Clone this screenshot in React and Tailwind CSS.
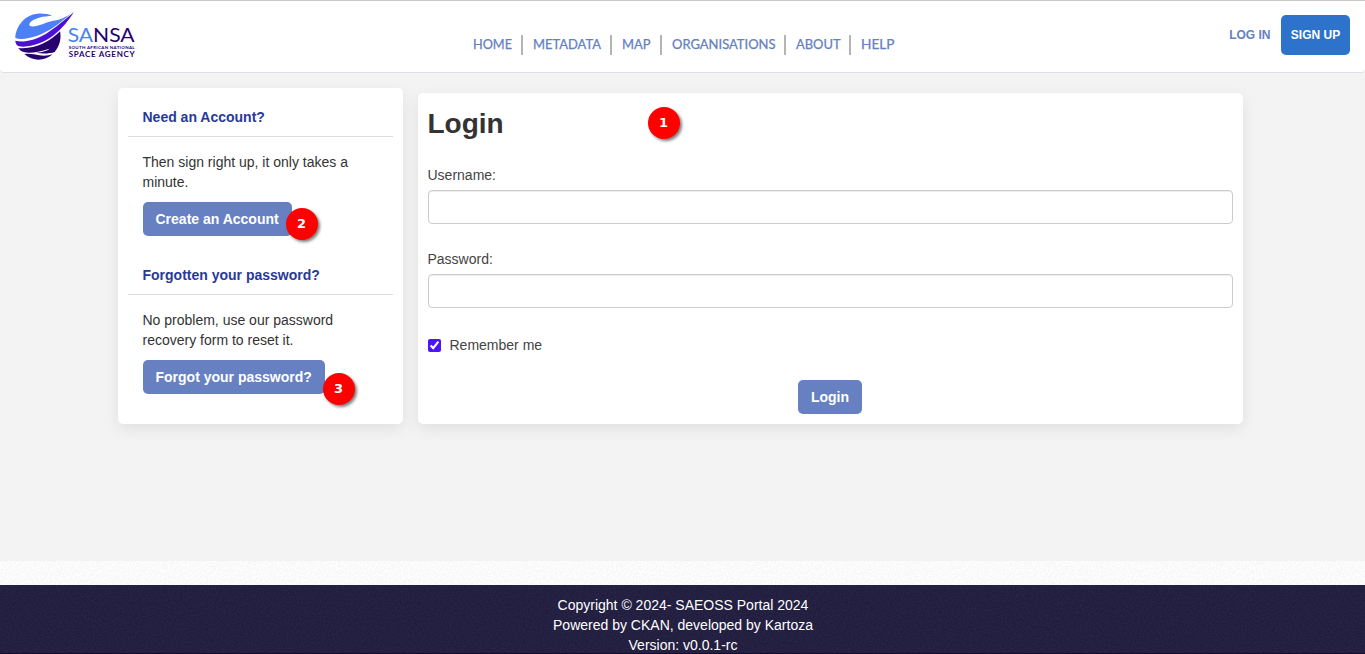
import React from "react";

const SANS = "font-['Liberation_Sans',Arial,sans-serif]";

const NAV = [
  { label: "HOME", cell: "w-[50px]", length: 39 },
  { label: "METADATA", cell: "w-[89px]", length: 68 },
  { label: "MAP", cell: "w-[50px]", length: 28.5 },
  { label: "ORGANISATIONS", cell: "w-[124px]", length: 103.5 },
  { label: "ABOUT", cell: "w-[65px]", length: 44.5 },
  { label: "HELP", cell: "w-[54px]", length: 33.5 },
];

function Logo() {
  return (
    <svg className="block h-[72px] w-[150px]" viewBox="0 0 450 216" role="img" aria-label="SANSA">
      <path
        fill="#4d80f7"
        d="M46 114C47 78 76 43 113 41C130 40 145 42 156 48C133 48 103 54 91 67C83 77 91 81 104 79C126 76 142 64 170 61C184 58 199 50 211 43C181 68 147 96 112 107C87 115 63 120 46 114Z"
      />
      <path
        fill="#4c0fd6"
        d="M46 122C80 130 119 116 149 94C177 75 200 54 222 36C207 60 186 86 161 106C127 132 83 145 54 138C49 134 46 128 46 122Z"
      />
      <path
        fill="#270070"
        d="M180 94C185 117 178 140 164 156C150 161 126 162 108 158C128 156 143 152 148 146C122 155 82 163 65 154C60 150 57 147 55 144C100 149 149 127 180 94Z"
      />
      <path fill="#270070" d="M73 162C91 160 105 163 118 166C132 168 146 167 158 163C134 184 98 185 73 162Z" />
      <g className="font-['Lato',sans-serif]" fill="#270070">
        <text x="203" y="126" fontSize="60" textLength="201" lengthAdjust="spacingAndGlyphs">
          <tspan fill="#4d80f7">SA</tspan>
          <tspan>NSA</tspan>
        </text>
        <text x="206" y="146" fontSize="13.5" fontWeight="700" textLength="198" lengthAdjust="spacing">
          SOUTH AFRICAN NATIONAL
        </text>
        <text x="206" y="172" fontSize="24" fontWeight="700" textLength="198" lengthAdjust="spacing">
          SPACE AGENCY
        </text>
      </g>
    </svg>
  );
}

function NavLabel({ label, length }) {
  return (
    <svg className="block h-5 w-full overflow-visible">
      <text
        x="0"
        y="14"
        fill="#6480c1"
        stroke="#6480c1"
        strokeWidth="0.25"
        textLength={length}
        lengthAdjust="spacingAndGlyphs"
        className="font-['Lato',sans-serif] text-[12.5px]"
      >
        {label}
      </text>
    </svg>
  );
}

function Grain({ id, matrix }) {
  return (
    <svg className="absolute inset-0 h-full w-full" aria-hidden="true">
      <filter id={id} x="0" y="0" width="100%" height="100%" colorInterpolationFilters="sRGB">
        <feTurbulence type="fractalNoise" baseFrequency="0.6" numOctaves="2" stitchTiles="stitch" />
        <feColorMatrix type="matrix" values={matrix} />
      </filter>
      <rect width="100%" height="100%" filter={`url(#${id})`} />
    </svg>
  );
}

function Marker({ n, place }) {
  return (
    <span
      className={`absolute flex size-8 items-center justify-center rounded-full bg-[#fe0000] font-['DejaVu_Sans',sans-serif] text-[13px] leading-none font-bold text-white shadow-[2px_2px_3px_rgba(0,0,0,0.5)] ${place}`}
    >
      {n}
    </span>
  );
}

function Button({ children, marker }) {
  return (
    <button className="relative block h-[34px] rounded-[5px] bg-[#6680c2] px-[13px] text-sm font-bold whitespace-nowrap text-white">
      {children}
      {marker}
    </button>
  );
}

function HelpSection({ title, text, children }) {
  return (
    <section>
      <h2 className="border-b border-[#dddddd] pt-[9px] pb-[9px] pl-[15px] text-sm leading-5 font-bold text-[#28399a]">
        {title}
      </h2>
      <div className="pt-[15px] pl-[15px]">
        <p className="mb-[10px] w-[225px] text-sm leading-5 text-[#333333]">{text}</p>
        {children}
      </div>
    </section>
  );
}

function Field({ label, type }) {
  return (
    <label className="block text-sm leading-5 text-[#444444]">
      {label}
      <input
        type={type}
        className="mt-[5px] block h-[34px] w-full rounded-[4px] border border-[#cccccc] bg-white px-3 shadow-[inset_0_1px_1px_rgba(0,0,0,0.075)]"
      />
    </label>
  );
}

const CARD = "rounded-[5px] bg-white px-[10px] shadow-[0_5px_15px_rgba(0,0,0,0.08)]";

export default function App() {
  return (
    <div className={`flex h-[654px] w-full flex-col overflow-hidden bg-[#f3f3f3] ${SANS}`}>
      <header className="flex h-[73px] shrink-0 justify-between rounded-b-[4px] border-t border-b border-t-[#c8c8c8] border-b-[#dcdfe5] bg-white">
        <div className="-mt-px w-[472.5px]">
          <Logo />
        </div>
        <nav className="flex pt-[34px]">
          {NAV.map(({ label, cell, length }, i) => (
            <a
              key={label}
              className={`block h-5 shrink-0 ${cell} ${i ? "pl-[10.5px]" : ""} ${
                i < NAV.length - 1 ? "border-r-2 border-[#b4b4b4]" : ""
              }`}
            >
              <NavLabel label={label} length={length} />
            </a>
          ))}
        </nav>
        <div className="flex flex-1 items-start justify-end gap-[10.5px] pt-[14px] pr-[15px] text-xs font-bold">
          <a className="leading-10 text-[#6480c1]">LOG IN</a>
          <a className="w-[69px] rounded-[5px] bg-[#2e73cb] text-center leading-10 text-white">SIGN UP</a>
        </div>
      </header>

      <main className="flex h-[488px] shrink-0 items-start gap-[15px] pt-[15px] pl-[117.5px]">
        <aside className={`flex h-[336px] w-[285px] flex-col gap-5 pt-[10px] ${CARD}`}>
          <HelpSection title="Need an Account?" text="Then sign right up, it only takes a minute.">
            <Button marker={<Marker n="2" place="top-[5.5px] left-[143px]" />}>Create an Account</Button>
          </HelpSection>
          <HelpSection title="Forgotten your password?" text="No problem, use our password recovery form to reset it.">
            <Button marker={<Marker n="3" place="top-[12.5px] left-[180px]" />}>Forgot your password?</Button>
          </HelpSection>
        </aside>

        <section className={`relative mt-[5px] h-[331px] w-[825px] pt-[10px] ${CARD}`}>
          <h1 className="pt-px text-[28px] leading-[40px] font-bold text-[#333333]">Login</h1>
          <Marker n="1" place="top-[13.5px] left-[230px]" />
          <form className="flex flex-col pt-[21px]" onSubmit={(e) => e.preventDefault()}>
            <div className="flex flex-col gap-[25px]">
              <Field label="Username:" type="text" />
              <Field label="Password:" type="password" />
            </div>
            <label className="mt-[27px] flex items-center text-sm leading-5 text-[#444444]">
              <input type="checkbox" defaultChecked className="mr-[9px] size-[13px] accent-[#4b14fb]" />
              Remember me
            </label>
            <div className="mt-[25px] flex justify-center">
              <Button>Login</Button>
            </div>
          </form>
        </section>
      </main>

      <div className="relative h-6 shrink-0 bg-[#f7f7f7]">
        <Grain id="grain-light" matrix="0 0 0 0 1  0 0 0 0 1  0 0 0 0 1  3 0 0 0 -1.1" />
      </div>
      <footer className="relative h-[69px] shrink-0 border-b border-[#140c2c] bg-[#211d3e]">
        <Grain id="grain-dark" matrix="0 0 0 0 0.19  0 0 0 0 0.17  0 0 0 0 0.31  1.4 0 0 0 -0.5" />
        <div className="relative pt-[10px] pl-px text-center text-sm leading-5 text-white">
          <p>Copyright © 2024- SAEOSS Portal 2024</p>
          <p>Powered by CKAN, developed by Kartoza</p>
          <p>Version: v0.0.1-rc</p>
        </div>
      </footer>
    </div>
  );
}
